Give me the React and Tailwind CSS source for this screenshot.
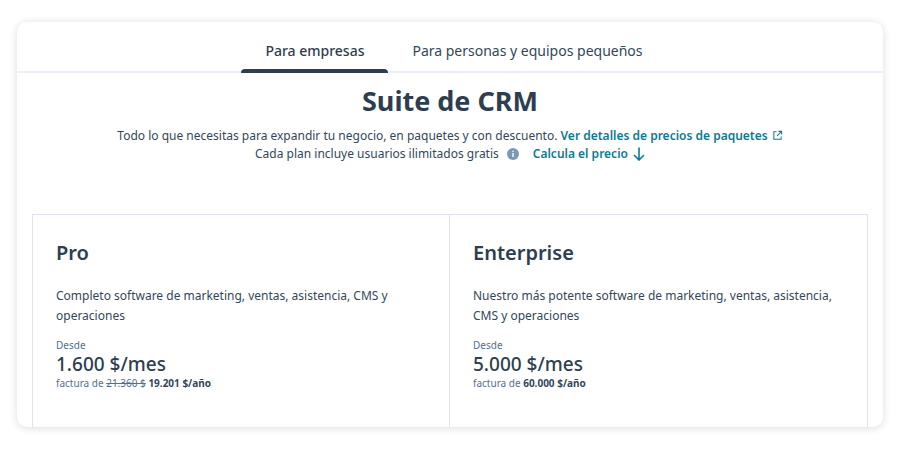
export default function App() {
  const f = { fontFamily: '"Noto Sans", Inter, sans-serif' };
  return (
    <div className="w-[900px] h-[450px] bg-white pt-[22px] px-[17px]" style={f}>
      <div className="h-[405px] rounded-[10px] bg-white shadow-[0_1px_8px_rgba(0,0,0,0.14)] overflow-hidden flex flex-col text-[#33475b]">
        <div className="h-[51px] border-b-2 border-[#eaf0f6] flex justify-center items-end gap-[24px] pr-[16px]">
          <div className="w-[147px] h-full flex flex-col items-center justify-between">
            <span className="mt-[18px] text-[14px] font-medium text-[#2d3e50]">Para empresas</span>
            <div className="w-full h-[4px] bg-[#2d3e50] rounded-t-sm mb-[-2px]"></div>
          </div>
          <div className="h-full flex items-start">
            <span className="mt-[18px] text-[14px] text-[#33475b]">Para personas y equipos pequeños</span>
          </div>
        </div>
        <h1 className="text-center text-[27px] font-bold text-[#2d3e50] mt-[10px] leading-[36px]">Suite de CRM</h1>
        <p className="text-center text-[12px] leading-[18px] mt-[8px]">
          Todo lo que necesitas para expandir tu negocio, en paquetes y con descuento.{" "}
          <span className="font-semibold text-[#0b7a95]">Ver detalles de precios de paquetes</span>
          <svg className="inline ml-1 -mt-[3px]" width="11" height="11" viewBox="0 0 12 12" fill="none" stroke="#0b7a95" strokeWidth="1.1"><path d="M5 2H2v8h8V7M7 1.5h3.5V5M10.5 1.5 5.5 6.5"/></svg>
        </p>
        <p className="text-center text-[12px] leading-[18px] flex justify-center items-center">
          Cada plan incluye usuarios ilimitados gratis
          <svg className="ml-[8px] mr-[14px]" width="12" height="12" viewBox="0 0 12 12"><circle cx="6" cy="6" r="6" fill="#7c98b6"/><rect x="5.3" y="5" width="1.4" height="4" fill="white"/><circle cx="6" cy="3.3" r="0.8" fill="white"/></svg>
          <span className="font-semibold text-[#0b7a95]">Calcula el precio</span>
          <svg className="ml-[5px]" width="12" height="14" viewBox="0 0 12 14" fill="none" stroke="#0b7a95" strokeWidth="1.6" strokeLinecap="round"><path d="M6 1v12M1.5 8.5 6 13l4.5-4.5"/></svg>
        </p>
        <div className="mx-[15px] mt-[51px] flex-1 border border-[#dfe3eb] border-b-0 grid grid-cols-2">
          {[
            { n: "Pro", d: "Completo software de marketing, ventas, asistencia, CMS y operaciones", p: "1.600 $/mes", old: "21.360 $", y: "19.201 $/año" },
            { n: "Enterprise", d: "Nuestro más potente software de marketing, ventas, asistencia, CMS y operaciones", p: "5.000 $/mes", old: null, y: "60.000 $/año" },
          ].map((c, i) => (
            <div key={c.n} className={"pl-[23px] pr-[20px] pt-[24px] " + (i === 0 ? "border-r border-[#dfe3eb]" : "")}>
              <h2 className="text-[20px] font-semibold text-[#2d3e50] leading-[28px]">{c.n}</h2>
              <p className="text-[12px] leading-[20px] mt-[19px] max-w-[360px]">{c.d}</p>
              <p className="text-[10px] text-[#516f90] mt-[12px] leading-[14px]">Desde</p>
              <p className="text-[19px] font-medium text-[#2d3e50] leading-[24px]">{c.p}</p>
              <p className="text-[10px] text-[#516f90] leading-[14px]">
                factura de {c.old && <span className="line-through">{c.old}</span>} <b className="text-[#33475b]">{c.y}</b>
              </p>
            </div>
          ))}
        </div>
      </div>
    </div>
  );
}
